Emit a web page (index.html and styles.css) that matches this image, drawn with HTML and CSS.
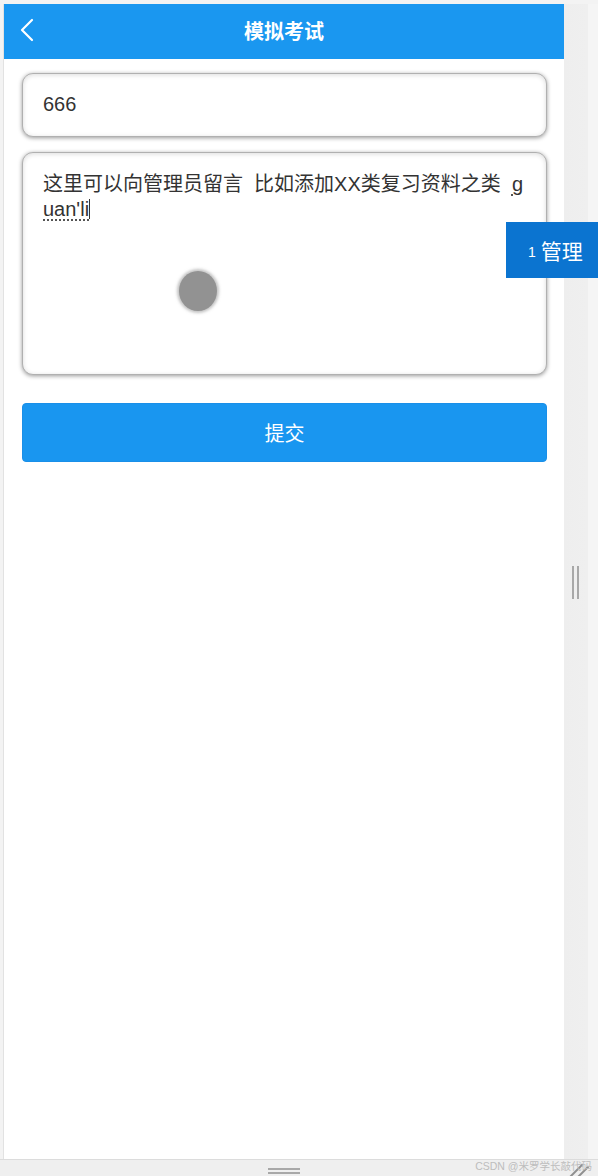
FILE: index.html
```html
<!DOCTYPE html>
<html lang="zh-CN">
<head>
<meta charset="utf-8">
<title>模拟考试</title>
<link rel="stylesheet" href="styles.css">
</head>
<body>
<div class="frame">
  <div class="top-row">
    <div class="phone">
      <header class="bar">
        <span class="back">
          <svg width="14" height="24" viewBox="0 0 14 24"><path d="M12 2 L2 12 L12 22" fill="none" stroke="#fff" stroke-width="2.2" stroke-linecap="round" stroke-linejoin="round"/></svg>
        </span>
        <h1 class="title">模拟考试</h1>
        <span class="spacer"></span>
      </header>
      <main class="content">
        <div class="field field-input">666</div>
        <div class="field field-area">
          <p class="area-text"><span class="line">这里可以向管理员留言&nbsp; 比如添加XX类复习资料之类&nbsp; <span class="ime">g</span></span><span class="line"><span class="ime">uan'li</span><span class="caret"></span></span></p>
          <span class="touch"></span>
        </div>
        <button class="submit" type="button">提交</button>
      </main>
    </div>
    <aside class="side">
      <span class="grip-v"><i></i><i></i></span>
    </aside>
  </div>
  <div class="bottom-row">
    <span class="grip-h"><i></i><i></i></span>
    <span class="resize"><i></i><i></i></span>
    <span class="mark">CSDN @米罗学长敲代码</span>
  </div>
  <div class="ime-pop"><span class="ime-num">1</span><span class="ime-word">管理</span></div>
</div>
</body>
</html>
```
FILE: styles.css
```css
* { box-sizing: border-box; }
html, body { margin: 0; padding: 0; }
body {
  width: 598px;
  height: 1176px;
  overflow: hidden;
  background: #f0f0f0;
  font-family: "Liberation Sans", "Noto Sans CJK SC", sans-serif;
  color: #333;
}
.frame {
  position: relative;
  width: 598px;
  height: 1176px;
  display: flex;
  flex-direction: column;
}
.top-row {
  display: flex;
  height: 1159px;
  padding: 4px 0 0 3px;
  background: #f3f3f3;
}
.phone {
  width: 561px;
  height: 1155px;
  background: #fff;
  border-left: 1px solid #e2e2e2;
  display: flex;
  flex-direction: column;
}
.bar {
  height: 55px;
  background: #1a97f0;
  display: grid;
  grid-template-columns: 60px 1fr 60px;
  align-items: center;
}
.back {
  display: flex;
  align-items: center;
  padding-left: 16px;
  height: 55px;
  padding-bottom: 4px;
}
.title {
  margin: 0;
  text-align: center;
  color: #fff;
  font-size: 20px;
  font-weight: bold;
  font-family: "Noto Sans CJK SC", sans-serif;
  padding-bottom: 2px;
}
.content {
  padding: 14px 17px 0 18px;
  display: flex;
  flex-direction: column;
}
.field {
  background: #fff;
  border: 1px solid #b0b0b0;
  border-radius: 11px;
  box-shadow: 0 1px 4px rgba(0,0,0,0.4), inset 0 1px 5px rgba(0,0,0,0.14);
  color: #333;
}
.field-input {
  height: 64px;
  display: flex;
  align-items: center;
  padding: 0 0 2px 20px;
  font-size: 20px;
  font-family: "Liberation Sans", sans-serif;
}
.field-area {
  position: relative;
  margin-top: 15px;
  height: 223px;
  padding: 19px 22px 0 20px;
}
.area-text {
  margin: 0;
  font-size: 20px;
  line-height: 25px;
  font-family: "Liberation Sans", "Noto Sans CJK SC", sans-serif;
  display: flex;
  flex-direction: column;
}
.line {
  display: block;
  white-space: nowrap;
}
.ime {
  text-decoration: underline dotted #555;
  text-underline-offset: 3px;
}
.caret {
  display: inline-block;
  width: 1px;
  height: 20px;
  background: #333;
  vertical-align: -3px;
}
.touch {
  position: absolute;
  left: 156px;
  top: 118px;
  width: 38px;
  height: 40px;
  border-radius: 50%;
  background: #929292;
  box-shadow: 0 0 3px 2px rgba(146,146,146,0.55);
}
.submit {
  margin-top: 28px;
  height: 59px;
  border: 1px solid #1a8fe8;
  border-radius: 4px;
  background: #1996f0;
  color: #fff;
  font-size: 20px;
  font-family: "Noto Sans CJK SC", sans-serif;
  padding: 0;
}
.side {
  flex: 1;
  display: flex;
  align-items: flex-start;
  background: linear-gradient(to right, #eeeeee 0, #efefef 24px, #f5f5f5 24px);
  padding-top: 562px;
  padding-left: 8px;
}
.grip-v {
  display: flex;
  gap: 3px;
}
.grip-v i {
  display: block;
  width: 2px;
  height: 33px;
  background: #a8a8a8;
}
.bottom-row {
  position: relative;
  flex: 1;
  background: #efefef;
  border-top: 1px solid #dcdcdc;
  display: flex;
  justify-content: center;
}
.grip-h {
  display: flex;
  flex-direction: column;
  gap: 2px;
  margin-top: 8px;
  margin-left: -30px;
}
.grip-h i {
  display: block;
  width: 32px;
  height: 2px;
  background: #a8a8a8;
}
.mark {
  position: absolute;
  right: 6px;
  top: 0;
  font-size: 10.5px;
  line-height: 13px;
  color: #bdbdbd;
  font-family: "Liberation Sans", "Noto Sans CJK SC", sans-serif;
}
.resize {
  position: absolute;
  left: 568px;
  top: 1px;
  width: 18px;
  height: 16px;
}
.resize i {
  position: absolute;
  display: block;
  width: 18px;
  height: 2px;
  background: #8f8f8f;
  transform: rotate(-45deg);
  transform-origin: left center;
}
.resize i:first-child { left: 2px; top: 15px; }
.resize i:last-child { left: 8px; top: 17px; }
.ime-pop {
  position: absolute;
  left: 506px;
  top: 222px;
  width: 92px;
  height: 56px;
  background: #0b74d0;
  color: #fff;
  display: flex;
  align-items: center;
  padding-left: 22px;
  gap: 5px;
}
.ime-num {
  font-size: 14px;
  font-family: "Liberation Sans", sans-serif;
  padding-top: 3px;
}
.ime-word {
  font-size: 21px;
  font-family: "Noto Sans CJK SC", sans-serif;
}
```
